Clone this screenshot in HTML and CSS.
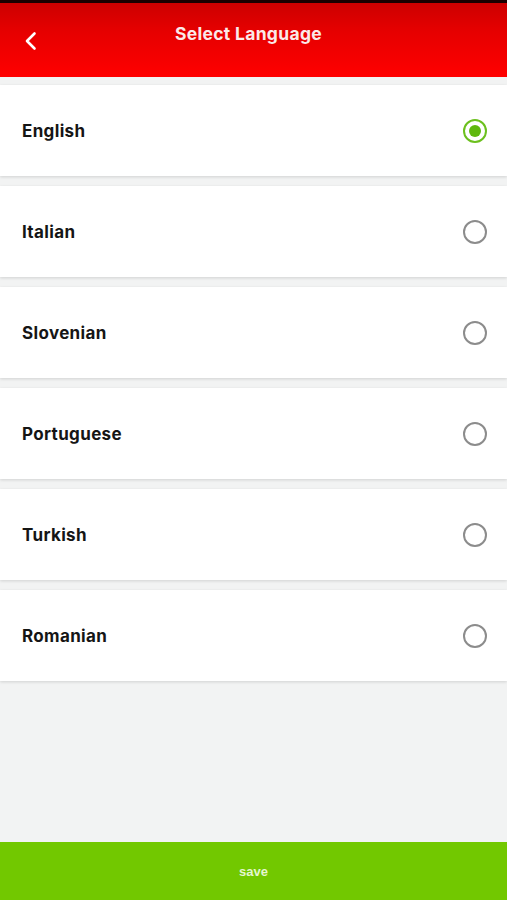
FILE: index.html
```html
<!DOCTYPE html>
<html>
<head>
<meta charset="utf-8">
<link rel="stylesheet" href="styles.css">
</head>
<body>
<div class="app">
  <header class="topbar">
    <button class="back" aria-label="Back">
      <svg width="14" height="20" viewBox="0 0 14 20"><path d="M10.5 2.5 L3 10 L10.5 17.5" fill="none" stroke="#fff" stroke-width="2.6" stroke-linecap="round" stroke-linejoin="round"/></svg>
    </button>
    <h1 class="title">Select Language</h1>
  </header>
  <main class="list">
    <div class="row"><span class="label">English</span><span class="radio checked"></span></div>
    <div class="row"><span class="label">Italian</span><span class="radio"></span></div>
    <div class="row"><span class="label">Slovenian</span><span class="radio"></span></div>
    <div class="row"><span class="label">Portuguese</span><span class="radio"></span></div>
    <div class="row"><span class="label">Turkish</span><span class="radio"></span></div>
    <div class="row"><span class="label">Romanian</span><span class="radio"></span></div>
  </main>
  <footer class="savebar">save</footer>
</div>
</body>
</html>
```
FILE: styles.css
```css
* { box-sizing: border-box; }
html, body { margin: 0; padding: 0; }
body {
  font-family: Inter, "Noto Sans", sans-serif;
  background: #f2f3f3;
}
.app {
  width: 507px;
  height: 900px;
  display: flex;
  flex-direction: column;
  background: #f2f3f3;
}
.topbar {
  height: 77px;
  flex: none;
  position: relative;
  display: flex;
  align-items: flex-start;
  justify-content: center;
  padding-right: 10px;
  border-top: 3px solid #1a0000;
  background: linear-gradient(180deg, #cc0000 0%, #e40000 35%, #ff0000 100%);
}
.back {
  position: absolute;
  left: 21px;
  top: 26px;
  width: 20px;
  height: 24px;
  padding: 0;
  border: 0;
  background: none;
  display: flex;
  align-items: center;
  justify-content: center;
}
.title {
  margin: 20px 0 0;
  color: #fbe9e9;
  font-size: 17.5px;
  font-weight: 700;
  letter-spacing: 0.3px;
}
.list {
  flex: 1;
  display: flex;
  flex-direction: column;
  gap: 10px;
  padding-top: 8px;
}
.row {
  height: 91px;
  background: #fff;
  display: flex;
  align-items: center;
  justify-content: space-between;
  padding: 0 20px 0 22px;
  box-shadow: 0 1px 3px rgba(0,0,0,0.14);
}
.label {
  font-size: 17px;
  font-weight: 700;
  color: #151515;
  letter-spacing: 0.35px;
}
.radio {
  width: 24px;
  height: 24px;
  border-radius: 50%;
  border: 2px solid #8c8c8c;
  display: flex;
  align-items: center;
  justify-content: center;
}
.radio.checked {
  border-color: #6cc01e;
}
.radio.checked::after {
  content: "";
  width: 12px;
  height: 12px;
  border-radius: 50%;
  background: #5fb80e;
}
.savebar {
  height: 58px;
  flex: none;
  background: #72c800;
  color: #e4f6cf;
  font-size: 13px;
  font-weight: 600;
  display: flex;
  align-items: center;
  justify-content: center;
  font-family: "Liberation Sans", Arial, sans-serif;
}
```
